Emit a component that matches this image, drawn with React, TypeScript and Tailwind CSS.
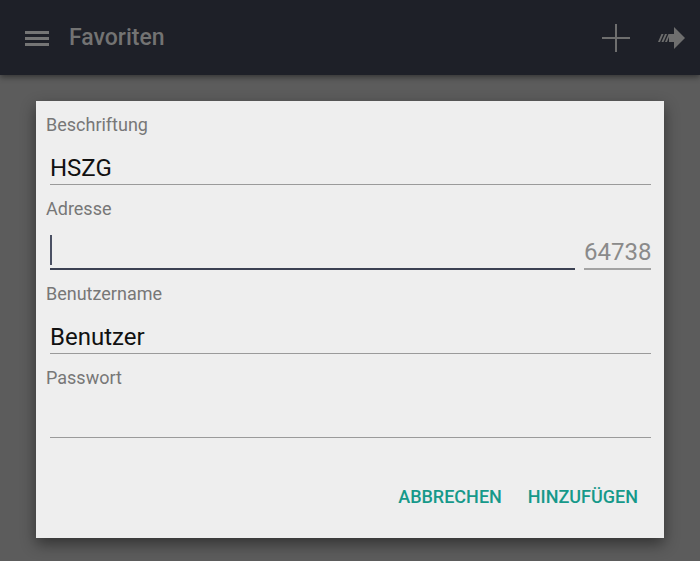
import React from "react";

const font = { fontFamily: "Roboto, 'Noto Sans', sans-serif" };

function Field({
  label,
  value,
  active,
  suffix,
}: {
  label: string;
  value?: string;
  active?: boolean;
  suffix?: string;
}) {
  return (
    <div className="mb-3">
      <div className="pl-[10px] text-[18px] leading-[24px] text-[#777777]">{label}</div>
      <div className="mt-[15px] flex gap-[9px] pl-[14px] pr-[13px]">
        {active ? (
          <div className="h-[34px] flex-1 border-b-2 border-[#3b4152] flex items-start">
            <div className="mt-[-1px] h-[30px] w-[2px] bg-[#4a5063]" />
          </div>
        ) : (
          <div className="h-[33px] flex-1 border-b border-[#9a9a9a] text-[24px] leading-[32px] text-[#111111]">
            {value}
          </div>
        )}
        {suffix && (
          <div className="h-[34px] w-[67px] border-b-2 border-[#a3a3a3] text-[24px] leading-[32px] text-[#8a8a8a]">
            {suffix}
          </div>
        )}
      </div>
    </div>
  );
}

export default function App() {
  return (
    <div className="h-[561px] w-[700px] overflow-hidden bg-[#5c5c5c]" style={font}>
      {/* Toolbar */}
      <div className="relative z-10 flex h-[75px] items-center bg-[#1e2028] shadow-[0_2px_6px_rgba(0,0,0,0.45)]">
        <div className="ml-[25px] mt-[1px] flex w-[24px] flex-col gap-[3px]">
          <span className="h-[3px] bg-[#757575]" />
          <span className="h-[3px] bg-[#757575]" />
          <span className="h-[3px] bg-[#757575]" />
        </div>
        <div className="ml-[20px] mt-[2px] text-[23px] font-medium text-[#737373]">Favoriten</div>
        <div className="ml-auto flex items-center">
          <svg width="28" height="28" viewBox="0 0 28 28" className="mr-[28px] mt-[1px]">
            <path d="M14 0V28M0 14H28" stroke="#6e6e6e" strokeWidth="2" />
          </svg>
          <svg width="28" height="24" viewBox="0 0 28 24" className="mr-[14px]">
            <polygon points="16,1 27,12 16,23" fill="#6e6e6e" />
            <rect x="11" y="8" width="6" height="8" fill="#6e6e6e" />
            <polygon points="0,16 3.5,8 5.5,8 2,16" fill="#6e6e6e" />
            <polygon points="3.5,16 7,8 9,8 5.5,16" fill="#6e6e6e" />
            <polygon points="7,16 10.5,8 12,8 9,16" fill="#6e6e6e" />
          </svg>
        </div>
      </div>

      {/* Dialog */}
      <div className="px-[36px] pt-[26px]">
        <div className="h-[437px] bg-[#eeeeee] pt-3 shadow-[0_6px_14px_rgba(0,0,0,0.45)]">
          <Field label="Beschriftung" value="HSZG" />
          <Field label="Adresse" active suffix="64738" />
          <Field label="Benutzername" value="Benutzer" />
          <Field label="Passwort" value="" />
          <div className="mt-[47px] flex justify-end gap-[26px] pr-[26px] text-[18px] font-medium leading-[24px] text-[#16998a]">
            <span>ABBRECHEN</span>
            <span>HINZUFÜGEN</span>
          </div>
        </div>
      </div>
    </div>
  );
}
